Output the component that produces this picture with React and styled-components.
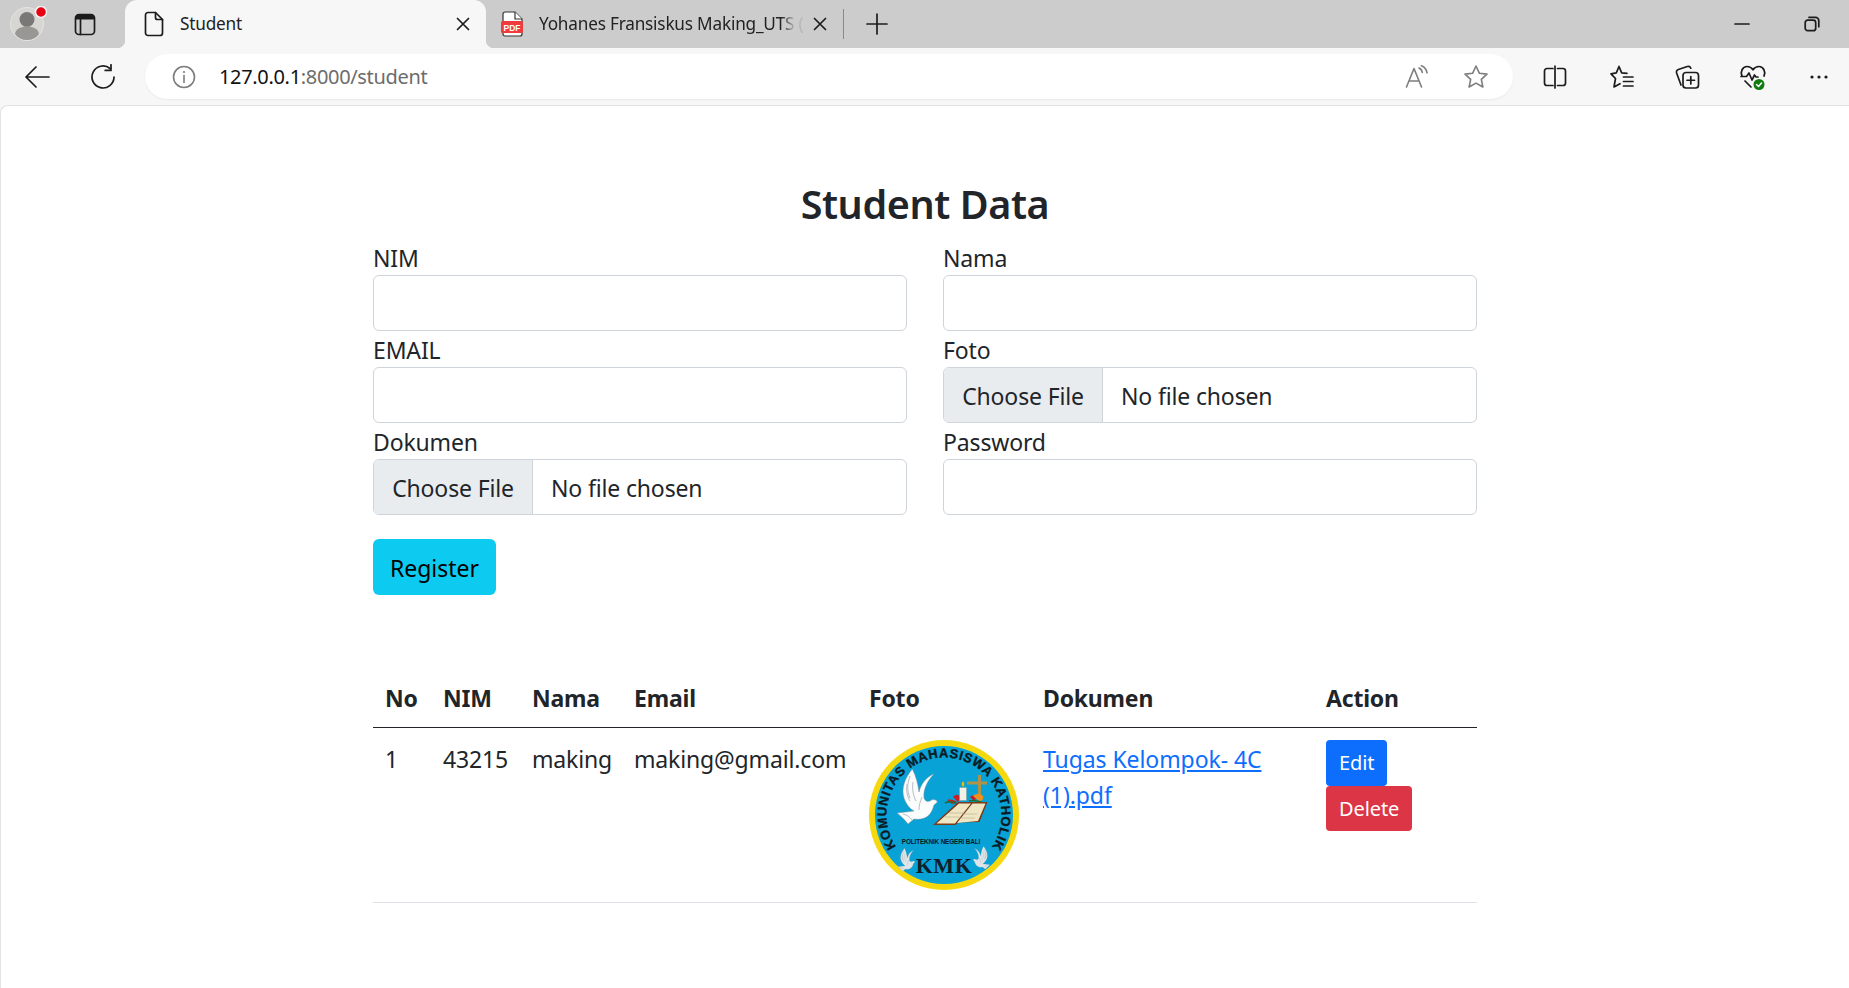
import React from 'react'
import styled, { createGlobalStyle } from 'styled-components'

const Global = createGlobalStyle`
  html, body { margin: 0; padding: 0; background: #f7f7f7; }
  body { font-family: 'Noto Sans', 'Open Sans', sans-serif; color: #212529; overflow: hidden; }
`

const Window = styled.div`
  width: 1849px;
  height: 988px;
  display: flex;
  flex-direction: column;
  overflow: hidden;
`

const TabStrip = styled.div`
  height: 48px;
  flex: none;
  background: #cccccc;
  display: flex;
  align-items: stretch;
  padding: 0 2px 0 3px;
`

const StripIcon = styled.div`
  width: ${p => p.$w || 56}px;
  flex: none;
  display: flex;
  align-items: center;
  justify-content: center;
  position: relative;
`

const ActiveTab = styled.div`
  width: 361px;
  flex: none;
  margin-left: 10px;
  background: #f7f7f7;
  border-radius: 12px 12px 0 0;
  position: relative;
  display: flex;
  align-items: center;
  padding: 0 16px 0 19px;
  box-sizing: border-box;
  &:before, &:after {
    content: '';
    position: absolute;
    bottom: 0;
    width: 8px;
    height: 8px;
    background: radial-gradient(circle at 0 0, transparent 8px, #f7f7f7 8.5px);
  }
  &:before { left: -8px; }
  &:after { right: -8px; transform: scaleX(-1); }
`

const IdleTab = styled.div`
  width: 357px;
  flex: none;
  display: flex;
  align-items: center;
  padding: 0 8px 0 15px;
  box-sizing: border-box;
`

const TabTitle = styled.span`
  flex: 1;
  min-width: 0;
  margin-left: 16px;
  padding-bottom: 1px;
  font-size: 17.2px;
  line-height: 24px;
  white-space: nowrap;
  color: #222;
  letter-spacing: -0.2px;
  ${p => p.$fade && `
    -webkit-mask-image: linear-gradient(to right, #000 91%, rgba(0, 0, 0, 0.12) 96%);
    mask-image: linear-gradient(to right, #000 91%, rgba(0, 0, 0, 0.12) 96%);
  `}
`

const TabDivider = styled.div`
  width: 1px;
  height: 30px;
  align-self: center;
  background: #8a8a8a;
  flex: none;
`

const Spacer = styled.div`
  flex: 1;
`

const Toolbar = styled.div`
  height: 57px;
  flex: none;
  background: #f7f7f7;
  display: flex;
  align-items: center;
  padding: 0 2px 0 9px;
  box-sizing: border-box;
`

const ToolBtn = styled.div`
  width: ${p => p.$w || 66}px;
  flex: none;
  display: flex;
  align-items: center;
  justify-content: center;
`

const AddressBar = styled.div`
  height: 45px;
  width: 1368px;
  flex: none;
  margin-right: 9px;
  margin-left: 4px;
  background: #fff;
  border-radius: 23px;
  box-shadow: 0 1px 2px rgba(0, 0, 0, 0.06);
  display: flex;
  align-items: center;
  padding: 0 8px 0 27px;
  box-sizing: border-box;
`

const Url = styled.div`
  flex: 1;
  margin-left: 23px;
  font-size: 20px;
  letter-spacing: -0.33px;
  color: #6c6c6c;
  b { font-weight: 400; color: #111; }
`

const Page = styled.main`
  flex: 1;
  background: #fff;
  border-top: 1px solid #e3e3e3;
  border-left: 1px solid #e3e3e3;
  border-radius: 8px 0 0 0;
`

const Container = styled.div`
  width: 1104px;
  margin-left: 372px;
  font-size: 23px;
  line-height: 36px;
  letter-spacing: -0.15px;
`

const Title = styled.h2`
  margin: 74px 0 11px;
  font-size: 39.5px;
  line-height: 48px;
  font-weight: 600;
  text-align: center;
  color: #212529;
  letter-spacing: -0.4px;
`

const FormGrid = styled.form`
  display: grid;
  grid-template-columns: 534px 534px;
  column-gap: 36px;
`

const Field = styled.div`
  height: 92px;
`

const Label = styled.label`
  display: block;
  height: 36px;
  line-height: 38px;
`

const TextInput = styled.input`
  display: block;
  width: 100%;
  height: 56px;
  box-sizing: border-box;
  border: 1px solid #ced4da;
  border-radius: 6px;
  background: #fff;
`

const FileField = styled.div`
  height: 56px;
  box-sizing: border-box;
  border: 1px solid #ced4da;
  border-radius: 6px;
  display: flex;
  overflow: hidden;
`

const FileButton = styled.span`
  width: 159px;
  flex: none;
  background: #e9ecef;
  border-right: 1px solid #ced4da;
  text-align: center;
  line-height: 56px;
  box-sizing: border-box;
`

const FileName = styled.span`
  margin-left: 18px;
  line-height: 56px;
`

const RegisterButton = styled.button`
  display: block;
  margin-top: 24px;
  width: 123px;
  height: 56px;
  border: 0;
  border-radius: 6px;
  background: #0dcaf0;
  color: #000;
  font: inherit;
  padding: 2px 0 0;
`

const Table = styled.table`
  width: 1104px;
  table-layout: fixed;
  border-collapse: collapse;
  margin-top: 73px;
`

const HeadCell = styled.th`
  text-align: left;
  font-weight: 700;
  padding: 12px 12px 11px;
  border-bottom: 1px solid #212529;
  letter-spacing: -0.2px;
`

const Cell = styled.td`
  padding: ${p => (p.$text ? '13px 12px 11px' : '12px')};
  vertical-align: top;
  border-bottom: 1px solid #dee2e6;
`

const DocLink = styled.a`
  color: #0d6efd;
  text-decoration: underline;
  letter-spacing: -0.08px;
`

const ActionButton = styled.button`
  display: block;
  height: ${p => p.$h}px;
  border: 0;
  border-radius: 4px;
  padding: 0 13px;
  font-family: inherit;
  font-size: 20px;
  line-height: 30px;
  letter-spacing: -0.1px;
  color: #fff;
  background: ${p => p.$bg};
`

const ink = { fill: 'none', stroke: '#1c1c1c', strokeWidth: 1.7, strokeLinecap: 'round', strokeLinejoin: 'round' }
const grey = { fill: 'none', stroke: '#7d7d7d', strokeWidth: 1.6, strokeLinecap: 'round', strokeLinejoin: 'round' }

const Avatar = () => (
  <svg width="40" height="36" viewBox="0 0 40 36">
    <circle cx="18" cy="18" r="16.500" fill="#d8d6d2" stroke="#e6e4e0" strokeWidth="1" />
    <circle cx="18" cy="13.500" r="7.500" fill="#7a7876" />
    <path d="M6 28c1-5.500 6-7.500 12-7.500s11 2 12 7.500c-3 4-7 6-12 6s-9-2-12-6z" fill="#999794" />
    <circle cx="32" cy="6" r="5.500" fill="#e60012" stroke="#f2f2f2" strokeWidth="1.500" />
  </svg>
)

const TabsIcon = () => (
  <svg width="22" height="23" viewBox="0 0 22 23">
    <rect x="1.500" y="1.500" width="19" height="20" rx="3.500" {...ink} />
    <path d="M1.500 5a3.500 3.500 0 0 1 3.500-3.500h12A3.500 3.500 0 0 1 20.500 5v1.500h-19z" fill="#1c1c1c" />
    <path d="M6.500 6.500v15" {...ink} />
  </svg>
)

const PageIcon = () => (
  <svg width="20" height="26" viewBox="0 0 20 26">
    <path d="M4 1.500h7.500l7 7V22a2.500 2.500 0 0 1-2.500 2.500H4A2.500 2.500 0 0 1 1.500 22V4A2.500 2.500 0 0 1 4 1.500z" {...ink} />
    <path d="M11.500 1.500v5a2 2 0 0 0 2 2h5" {...ink} />
  </svg>
)

const PdfIcon = () => (
  <svg width="22" height="26" viewBox="0 0 22 26">
    <path d="M4 1h10l7 7v15a2 2 0 0 1-2 2H4a2 2 0 0 1-2-2V3a2 2 0 0 1 2-2z" fill="#fff" stroke="#333" strokeWidth="1.200" />
    <path d="M14 1v7h7" fill="#fff" stroke="#333" strokeWidth="1.200" />
    <rect x="0" y="10" width="22" height="12" rx="1.500" fill="#ee3b3b" />
    <text x="11" y="19.500" textAnchor="middle" fontSize="8.500" fontWeight="700" fill="#fff" fontFamily="'Liberation Sans', sans-serif">PDF</text>
  </svg>
)

const CloseIcon = () => (
  <svg width="14" height="14" viewBox="0 0 14 14"><path d="M1.500 1.500l11 11M12.500 1.500l-11 11" {...ink} /></svg>
)

const PlusIcon = () => (
  <svg width="22" height="22" viewBox="0 0 22 22"><path d="M11 1v20M1 11h20" {...ink} /></svg>
)

const MinIcon = () => (
  <svg width="16" height="4" viewBox="0 0 16 4"><path d="M1 2h14" {...ink} /></svg>
)

const RestoreIcon = () => (
  <svg width="16" height="16" viewBox="0 0 16 16">
    <rect x="1.200" y="4.200" width="10.500" height="10.500" rx="2.500" {...ink} />
    <path d="M5 1.400h6.500a3.300 3.300 0 0 1 3.300 3.300v6" {...ink} />
  </svg>
)

const BackIcon = () => (
  <svg width="26" height="24" viewBox="0 0 26 24"><path d="M12 2L2 12l10 10M2 12h23" {...ink} /></svg>
)

const ReloadIcon = () => (
  <svg width="26" height="26" viewBox="0 0 26 26">
    <path d="M20 4.500A11 11 0 1 0 24 13" {...ink} />
    <path d="M21 0.800v5.600h-5.800" {...ink} />
  </svg>
)

const InfoIcon = () => (
  <svg width="24" height="24" viewBox="0 0 24 24">
    <circle cx="12" cy="12" r="10.500" {...grey} />
    <path d="M12 10.500v7" {...grey} />
    <circle cx="12" cy="7" r="1.100" fill="#7d7d7d" />
  </svg>
)

const ReadIcon = () => (
  <svg width="24" height="24" viewBox="0 0 24 24">
    <path d="M1.500 22L9 3.500 16.500 22M4 16h10" {...grey} />
    <path d="M14 3c2 .8 3 2.300 3.300 4.500M16.500 .8c3 1.200 5 3.800 5.500 7" {...grey} />
  </svg>
)

const StarOutline = () => (
  <svg width="26" height="26" viewBox="0 0 26 26">
    <path d="M13 2l3.300 7.200 7.700.9-5.700 5.200 1.600 7.700L13 19.100 6.100 23l1.600-7.700L2 10.100l7.700-.9z" {...grey} />
  </svg>
)

const SplitIcon = () => (
  <svg width="24" height="24" viewBox="0 0 24 24">
    <path d="M10 3.500H4a2.500 2.500 0 0 0-2.500 2.500v12A2.500 2.500 0 0 0 4 20.500h6M14.500 3.500H20A2.500 2.500 0 0 1 22.500 6v12a2.500 2.500 0 0 1-2.500 2.500h-5.500" {...ink} />
    <path d="M12 1v22" {...ink} />
  </svg>
)

const FavsIcon = () => (
  <svg width="26" height="26" viewBox="0 0 26 26">
    <path d="M11 2.500l2.700 6.400 5.300.4M3 9.800l5.300-.9L11 2.500M3 9.800l4.500 4.700L6 23l6-3.300" {...ink} />
    <path d="M15.500 13H25M15.500 17.500H25M15.500 22H25" {...ink} />
  </svg>
)

const CollectionsIcon = () => (
  <svg width="26" height="26" viewBox="0 0 26 26">
    <path d="M7 21L2.600 9c-.5-1.500.2-3 1.700-3.500l9-3c1.500-.4 3 .3 3.500 1.700" {...ink} />
    <rect x="9" y="8.500" width="15.500" height="15.500" rx="3" {...ink} />
    <path d="M16.800 12.500v7.500M13 16.250h7.500" {...ink} />
  </svg>
)

const HealthIcon = () => (
  <svg width="28" height="28" viewBox="0 0 28 28">
    <path d="M3 13C1 9 3.500 3.500 8 3.500c2.700 0 4.800 1.400 6 3.300 1.200-1.900 3.300-3.300 6-3.300 4.500 0 7 5.500 5 9.500" {...ink} />
    <path d="M2 13.500h5.500l2.500-3.500 3 7 2.500-5 1.500 2h2" {...ink} />
    <path d="M6 18l6 6" {...ink} />
    <circle cx="20" cy="21.500" r="5.500" fill="#107c10" />
    <path d="M17.500 21.500l2 2 3-3.500" fill="none" stroke="#fff" strokeWidth="1.500" strokeLinecap="round" strokeLinejoin="round" />
  </svg>
)

const DotsIcon = () => (
  <svg width="20" height="6" viewBox="0 0 20 6">
    <circle cx="3" cy="3" r="1.600" fill="#1c1c1c" />
    <circle cx="10" cy="3" r="1.600" fill="#1c1c1c" />
    <circle cx="17" cy="3" r="1.600" fill="#1c1c1c" />
  </svg>
)

// drawn in the logo's own coordinates, small doves reuse it through a transform
const Dove = ({ transform, tint = '#fbfcfc' }) => (
  <g transform={transform}>
    <path d="M43.300 29C36 38 32 48 35 58c2 6 6 11 10 13l-17 2c4 3 8 7 11 11l6-5c5 1 11 0 15-4 3-3 4-7 5-10l3.500-3c-2-3-5-3-7.500-1-3 1-5 0-6-3-1-8 3-17 10-24-8 3-13 10-15 18-1-8-3-16-6.700-23z" fill={tint} stroke="#7f8f9a" strokeWidth="0.500" />
    <path d="M41 36c-3 8-3 15 0 22M38 44c-1 6 0 12 3 17M44 42c-1 7 0 13 3 19M53 57c-2 5-3 8-3 13M34 74c4 1 7 3 9 6" fill="none" stroke="#98a4ac" strokeWidth="0.700" />
  </g>
)

const Logo = () => (
  <svg width="150" height="150" viewBox="0 0 150 150" style={{ display: 'block' }}>
    <defs>
      <path id="logo-arc" d="M28.300 108.500A57.500 57.500 0 1 1 121.700 108.500" />
    </defs>
    <circle cx="75" cy="75" r="75" fill="#f6d80e" />
    <circle cx="75" cy="75" r="69" fill="#08a2d6" />
    <text fontFamily="'Liberation Sans', sans-serif" fontWeight="700" fontSize="13" fill="#0a1a22" stroke="#0a1a22" strokeWidth="0.350">
      <textPath href="#logo-arc" startOffset="50%" textAnchor="middle" textLength="248" lengthAdjust="spacing">KOMUNITAS MAHASISWA KATHOLIK</textPath>
    </text>
    <Dove />
    <path d="M109 35h3v25h-3zM98 41.500h20v3H98z" fill="#b0934a" />
    <path d="M84 57c3-3 5-3 8 0l-3 5zM78 60c4-1 7 0 10 2l-5 2zM101 57c2-2 5-2 7 0l-3 4z" fill="#c62026" />
    <path d="M104 56c3-3 7-3 10 0 1 3-1 5-4 5z" fill="#ef8f1d" />
    <path d="M76 63c4-2 9-1 12 1M100 61c5-1 10 0 14 2" fill="none" stroke="#1f6b2c" strokeWidth="1.500" />
    <rect x="90.500" y="47.500" width="7" height="13" fill="#f4f2e6" stroke="#8a8a7a" strokeWidth="0.400" />
    <ellipse cx="94" cy="44" rx="1.300" ry="2.500" fill="#f4b400" />
    <path d="M64 85l25-23h29.500l-8 20-21 .5-3 2.500z" fill="#7a3a1c" />
    <path d="M67.500 83.500L90 63.500h12l-16 20zM88 83l15.500-19.500h13L109 81z" fill="#efe6c4" />
    <path d="M80 73h14M76 77h14M93 74h15M90 78h16" fill="none" stroke="#b8ac8a" strokeWidth="0.600" />
    <text x="72" y="104" textAnchor="middle" fontFamily="'Liberation Sans', sans-serif" fontWeight="700" fontSize="6.400" fill="#0a1a22">POLITEKNIK NEGERI BALI</text>
    <text x="75" y="133" textAnchor="middle" fontFamily="'Liberation Serif', serif" fontWeight="700" fontSize="22" letterSpacing="0.500" fill="#10202a">KMK</text>
    <Dove transform="translate(17.300 96) scale(0.42)" tint="#dfe6ea" />
    <Dove transform="translate(132.700 94) scale(-0.42 0.42)" tint="#dfe6ea" />
  </svg>
)

export default function App() {
  return (
    <Window>
      <Global />
      <TabStrip>
        <StripIcon $w={52}><Avatar /></StripIcon>
        <StripIcon $w={60}><TabsIcon /></StripIcon>
        <ActiveTab>
          <PageIcon />
          <TabTitle>Student</TabTitle>
          <CloseIcon />
        </ActiveTab>
        <IdleTab>
          <PdfIcon />
          <TabTitle $fade>Yohanes Fransiskus Making_UTS (</TabTitle>
          <StripIcon $w={30}><CloseIcon /></StripIcon>
        </IdleTab>
        <TabDivider />
        <StripIcon $w={66}><PlusIcon /></StripIcon>
        <Spacer />
        <StripIcon $w={70}><MinIcon /></StripIcon>
        <StripIcon $w={70}><RestoreIcon /></StripIcon>
      </TabStrip>
      <Toolbar>
        <ToolBtn $w={56}><BackIcon /></ToolBtn>
        <ToolBtn $w={76}><ReloadIcon /></ToolBtn>
        <AddressBar>
          <InfoIcon />
          <Url><b>127.0.0.1</b>:8000/student</Url>
          <ToolBtn $w={59}><ReadIcon /></ToolBtn>
          <ToolBtn $w={59}><StarOutline /></ToolBtn>
        </AddressBar>
        <ToolBtn><SplitIcon /></ToolBtn>
        <ToolBtn><FavsIcon /></ToolBtn>
        <ToolBtn><CollectionsIcon /></ToolBtn>
        <ToolBtn><HealthIcon /></ToolBtn>
        <ToolBtn><DotsIcon /></ToolBtn>
      </Toolbar>
      <Page>
        <Container>
          <Title>Student Data</Title>
          <FormGrid>
            <Field><Label>NIM</Label><TextInput type="text" /></Field>
            <Field><Label>Nama</Label><TextInput type="text" /></Field>
            <Field><Label>EMAIL</Label><TextInput type="email" /></Field>
            <Field>
              <Label>Foto</Label>
              <FileField><FileButton>Choose File</FileButton><FileName>No file chosen</FileName></FileField>
            </Field>
            <Field>
              <Label>Dokumen</Label>
              <FileField><FileButton>Choose File</FileButton><FileName>No file chosen</FileName></FileField>
            </Field>
            <Field><Label>Password</Label><TextInput type="password" /></Field>
          </FormGrid>
          <RegisterButton type="button">Register</RegisterButton>
          <Table>
            <colgroup>
              <col width="58" /><col width="89" /><col width="102" /><col width="235" /><col width="174" /><col width="283" /><col width="163" />
            </colgroup>
            <thead>
              <tr>
                <HeadCell>No</HeadCell>
                <HeadCell>NIM</HeadCell>
                <HeadCell>Nama</HeadCell>
                <HeadCell>Email</HeadCell>
                <HeadCell>Foto</HeadCell>
                <HeadCell>Dokumen</HeadCell>
                <HeadCell>Action</HeadCell>
              </tr>
            </thead>
            <tbody>
              <tr>
                <Cell $text>1</Cell>
                <Cell $text>43215</Cell>
                <Cell $text>making</Cell>
                <Cell $text>making@gmail.com</Cell>
                <Cell><Logo /></Cell>
                <Cell $text><DocLink href="#">Tugas Kelompok- 4C (1).pdf</DocLink></Cell>
                <Cell>
                  <ActionButton type="button" $bg="#0d6efd" $h={46}>Edit</ActionButton>
                  <ActionButton type="button" $bg="#dc3545" $h={45}>Delete</ActionButton>
                </Cell>
              </tr>
            </tbody>
          </Table>
        </Container>
      </Page>
    </Window>
  )
}
